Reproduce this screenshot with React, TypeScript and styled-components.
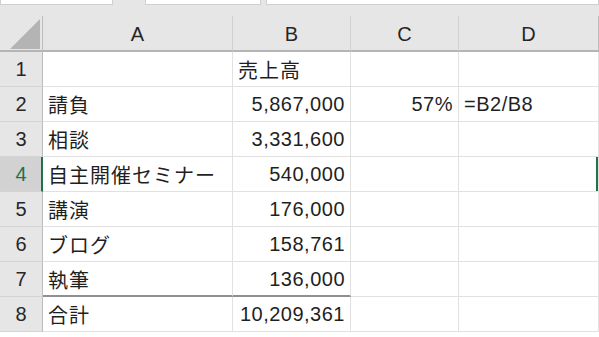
import { Fragment } from 'react';
import styled, { createGlobalStyle } from 'styled-components';

const GlobalStyle = createGlobalStyle`
  html, body {
    margin: 0;
    padding: 0;
    background: #ffffff;
    overflow: hidden;
  }
`;

const Sheet = styled.div`
  width: 599px;
  height: 337px;
  overflow: hidden;
  font-family: "Noto Sans CJK JP", "Noto Sans", sans-serif;
  background: #ffffff;
`;

const TopStrip = styled.div`
  display: flex;
  height: 16px;
  background: #e6e6e6;
`;

const Tab = styled.div<{ $w: number; $ml?: number }>`
  width: ${p => p.$w}px;
  margin-left: ${p => p.$ml ?? 0}px;
  height: 5px;
  background: #ffffff;
  border: 1px solid #d0d0d0;
  border-top: none;
  box-sizing: border-box;
`;

const Grid = styled.div`
  display: grid;
  grid-template-columns: 43px 190px 118px 108px 140px;
  grid-template-rows: 36px;
  grid-auto-rows: 35px;
`;

const Corner = styled.div`
  position: relative;
  background: #e6e6e6;
  border-right: 1px solid #bdbdbd;
  border-bottom: 2px solid #b5b5b5;
  box-sizing: border-box;
`;

const CornerTriangle = styled.svg`
  position: absolute;
  left: 9px;
  top: 2px;
`;

const ColHead = styled.div<{ $edge?: boolean }>`
  display: flex;
  align-items: center;
  justify-content: center;
  background: #e6e6e6;
  border-right: 1px solid ${p => (p.$edge ? '#bdbdbd' : '#d0d0d0')};
  border-bottom: 2px solid #b5b5b5;
  box-sizing: border-box;
  font-family: "Liberation Sans", Arial, sans-serif;
  font-size: 20px;
  color: #262626;
  padding-top: 2px;
`;

const RowHead = styled.div<{ $active?: boolean }>`
  display: flex;
  align-items: center;
  justify-content: center;
  background: ${p => (p.$active ? '#d2d2d2' : '#e6e6e6')};
  border-right: ${p => (p.$active ? '2px solid #217346' : '1px solid #bdbdbd')};
  border-bottom: 1px solid #d4d4d4;
  box-sizing: border-box;
  font-family: "Liberation Sans", Arial, sans-serif;
  font-size: 20px;
  color: ${p => (p.$active ? '#217346' : '#262626')};
  padding-left: ${p => (p.$active ? '1px' : '0')};
`;

const Cell = styled.div<{ $right?: boolean; $total?: boolean; $sel?: boolean }>`
  display: flex;
  align-items: center;
  justify-content: ${p => (p.$right ? 'flex-end' : 'flex-start')};
  padding: 1px 5px 0 5px;
  border-right: 1px solid #e1e1e1;
  border-bottom: ${p => (p.$total ? '2px solid #909090' : '1px solid #e1e1e1')};
  box-sizing: border-box;
  font-size: 20px;
  letter-spacing: 1px;
  color: #1f1f1f;
  white-space: nowrap;
  box-shadow: ${p => (p.$sel ? 'inset -2px 0 0 #217346' : 'none')};
`;

const Num = styled.span`
  font-family: "Liberation Sans", Arial, sans-serif;
  letter-spacing: 0.5px;
`;

type Row = { a: string; b: string; c?: string; d?: string; total?: boolean };

const rows: Row[] = [
  { a: '', b: '売上高' },
  { a: '請負', b: '5,867,000', c: '57%', d: '=B2/B8' },
  { a: '相談', b: '3,331,600' },
  { a: '自主開催セミナー', b: '540,000' },
  { a: '講演', b: '176,000' },
  { a: 'ブログ', b: '158,761' },
  { a: '執筆', b: '136,000', total: true },
  { a: '合計', b: '10,209,361' },
];

const isNum = (s: string) => /^[0-9,%]+$/.test(s);

const App = () => (
  <Sheet>
    <GlobalStyle />
    <TopStrip>
      <Tab $w={113} />
      <Tab $w={116} $ml={32} />
      <Tab $w={333} $ml={5} />
    </TopStrip>
    <Grid>
      <Corner>
        <CornerTriangle width="32" height="32" viewBox="0 0 32 32">
          <polygon points="1,31 31,31 31,1" fill="#b4b4b4" />
        </CornerTriangle>
      </Corner>
      <ColHead>A</ColHead>
      <ColHead>B</ColHead>
      <ColHead>C</ColHead>
      <ColHead $edge>D</ColHead>
      {rows.map((r, i) => (
        <Fragment key={i}>
          <RowHead $active={i === 3}>{i + 1}</RowHead>
          <Cell $total={r.total}>{r.a}</Cell>
          <Cell $right={isNum(r.b)} $total={r.total}>
            {isNum(r.b) ? <Num>{r.b}</Num> : r.b}
          </Cell>
          <Cell $right>{r.c && <Num>{r.c}</Num>}</Cell>
          <Cell $sel={i === 3}>{r.d && <Num>{r.d}</Num>}</Cell>
        </Fragment>
      ))}
    </Grid>
  </Sheet>
);

export default App;
